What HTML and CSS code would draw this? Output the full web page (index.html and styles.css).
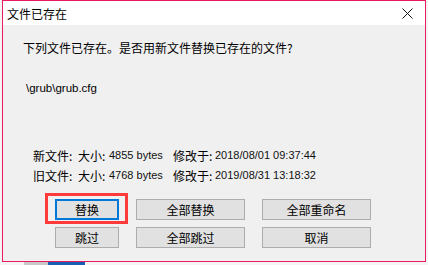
FILE: index.html
```html
<!DOCTYPE html>
<html>
<head>
<meta charset="utf-8">
<link rel="stylesheet" href="styles.css">
</head>
<body>
<div class="dialog">
  <div class="titlebar">
    <span class="title">文件已存在</span>
    <svg class="close" width="11" height="11" viewBox="0 0 11 11"><path d="M0.5 0.5 L10.5 10.5 M10.5 0.5 L0.5 10.5" stroke="#111" stroke-width="1" fill="none"/></svg>
  </div>
  <div class="content">
    <div class="message">下列文件已存在。是否用新文件替换已存在的文件?</div>
    <div class="path">\grub\grub.cfg</div>
    <div class="info">
      <div class="row"><span class="c1">新文件:</span><span class="c2">大小:</span><span class="c3">4855 bytes</span><span class="c4">修改于:</span><span class="c5">2018/08/01 09:37:44</span></div>
      <div class="row"><span class="c1">旧文件:</span><span class="c2">大小:</span><span class="c3">4768 bytes</span><span class="c4">修改于:</span><span class="c5">2019/08/31 13:18:32</span></div>
    </div>
    <div class="buttons">
      <button class="btn focus">替换</button>
      <button class="btn">全部替换</button>
      <button class="btn">全部重命名</button>
      <button class="btn">跳过</button>
      <button class="btn">全部跳过</button>
      <button class="btn">取消</button>
    </div>
  </div>
  <div class="highlight"></div>
</div>
<div class="strip"><span class="s1"></span><span class="s2"></span><span class="s3"></span></div>
</body>
</html>
```
FILE: styles.css
```css
html, body {
  margin: 0;
  padding: 0;
  background: #f4f4f4;
  width: 428px;
  height: 265px;
  overflow: hidden;
}
body {
  font-family: "Noto Sans CJK SC", "Liberation Sans", sans-serif;
  color: #000;
}
.dialog {
  position: relative;
  box-sizing: border-box;
  width: 424px;
  height: 262px;
  margin-left: 2px;
  border: 1px solid #e81b5e;
  background: #f0f0f0;
  display: flex;
  flex-direction: column;
}
.titlebar {
  height: 24px;
  background: #fff;
  display: flex;
  align-items: center;
  padding-left: 4px;
}
.title {
  font-size: 12px;
  line-height: 16px;
  margin-top: 1px;
}
.close {
  margin-left: auto;
  margin-right: 12px;
}
.content {
  padding-left: 20px;
}
.message {
  font-size: 12px;
  line-height: 16px;
  margin-top: 15px;
}
.path {
  font-family: "Liberation Sans", sans-serif;
  font-size: 11.5px;
  line-height: 16px;
  margin-top: 24px;
  margin-left: 3px;
}
.info {
  margin-top: 49px;
  margin-left: 10px;
  font-size: 12px;
}
.row {
  display: flex;
  align-items: center;
  height: 20px;
  white-space: nowrap;
}
.row span { flex: none; }
.c1 { width: 45px; font-family: "Noto Sans CJK SC", sans-serif; }
.c2 { width: 31px; font-family: "Noto Sans CJK SC", sans-serif; }
.c3 { width: 64px; font-family: "Liberation Sans", sans-serif; font-size: 11px; color: #111; }
.c4 { width: 42px; font-family: "Noto Sans CJK SC", sans-serif; }
.c5 { font-family: "Liberation Sans", sans-serif; font-size: 11px; color: #111; }
.buttons {
  margin-top: 14px;
  margin-left: 32px;
  display: grid;
  grid-template-columns: 64px 109px 109px;
  grid-auto-rows: 21px;
  column-gap: 17px;
  row-gap: 7px;
}
.btn {
  box-sizing: border-box;
  margin: 0;
  padding: 0;
  background: #e1e1e1;
  border: 1px solid #adadad;
  font-family: "Noto Sans CJK SC", sans-serif;
  font-size: 12px;
  line-height: 16px;
  color: #000;
}
.btn.focus {
  border: 2px solid #0078d7;
}
.highlight {
  position: absolute;
  left: 42px;
  top: 192px;
  width: 83px;
  height: 31px;
  box-sizing: border-box;
  border: 3px solid #ff3a3a;
}
.strip {
  display: flex;
  height: 3px;
}
.strip span { display: block; height: 3px; }
.s1 { width: 24px; background: #f4f4f4; }
.s2 { width: 24px; background: #c8c8c8; }
.s3 { width: 37px; background: #1a5fb4; }
```
